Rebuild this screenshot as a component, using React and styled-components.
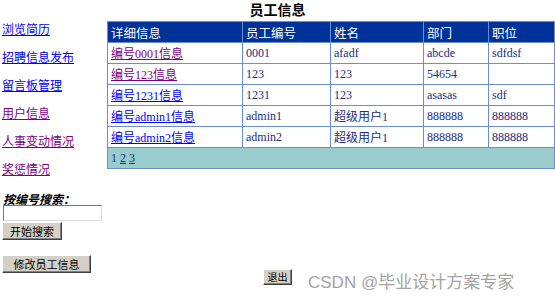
import React from 'react';
import styled, { createGlobalStyle } from 'styled-components';

const GlobalStyle = createGlobalStyle`
  body {
    margin: 0;
    background: #fff;
    font-family: "Liberation Serif", "Noto Sans CJK SC", serif;
  }
`;

const Page = styled.div`
  position: relative;
  width: 555px;
  height: 308px;
  overflow: hidden;
`;

const Title = styled.div`
  height: 21px;
  padding-top: 1px;
  box-sizing: border-box;
  text-align: center;
  font-family: "Noto Sans CJK SC", sans-serif;
  font-weight: bold;
  font-size: 14px;
  line-height: 16px;
  color: #000;
`;

const Body = styled.div`
  display: flex;
  align-items: flex-start;
`;

const Sidebar = styled.div`
  width: 107px;
  display: flex;
  flex-direction: column;
  padding-left: 2px;
  box-sizing: border-box;
`;

const NavLink = styled.a`
  display: block;
  height: 28px;
  font-family: "Noto Sans CJK SC", sans-serif;
  font-size: 12px;
  line-height: 13px;
  padding-top: 1px;
  box-sizing: border-box;
  color: ${p => (p.$visited ? '#800080' : '#0000ff')};
  text-decoration: underline;
  cursor: pointer;
`;

const SearchLabel = styled.div`
  margin-top: 3px;
  font-family: "Noto Sans CJK SC", sans-serif;
  font-size: 12px;
  font-weight: bold;
  font-style: italic;
  line-height: 13px;
  padding-left: 1px;
`;

const SearchInput = styled.input`
  width: 99px;
  height: 16px;
  box-sizing: border-box;
  margin: 0 0 0 1px;
  border: 1px solid #999;
  border-top-color: #777;
  border-left-color: #777;
  border-right-color: #ddd;
  border-bottom-color: #ddd;
  padding: 0;
`;

const GrayButton = styled.button`
  display: block;
  width: ${p => p.$w}px;
  height: ${p => p.$h || 18}px;
  box-sizing: border-box;
  margin: ${p => p.$mt || 0}px 0 0 0;
  padding: 0;
  background: #d4d0c8;
  border: 1px solid;
  border-color: #fff #404040 #404040 #fff;
  box-shadow: inset -1px -1px 0 #808080;
  font-family: "Noto Sans CJK SC", sans-serif;
  font-size: ${p => p.$fs || 11}px;
  line-height: 14px;
  color: #000;
`;

const Table = styled.table`
  width: 447px;
  table-layout: fixed;
  border-collapse: collapse;
  border: 1px solid #6a8ed6;
  font-size: 12px;
`;

const HeadCell = styled.th`
  background: #003399;
  color: #fff;
  text-align: left;
  font-family: "Noto Sans CJK SC", sans-serif;
  font-weight: normal;
  font-size: 12.5px;
  height: 20px;
  padding: 0 0 0 3px;
  border: 1px solid #6a8ed6;
  width: ${p => p.$w}px;
`;

const Cell = styled.td`
  height: 20px;
  padding: 0 0 0 3px;
  border: 1px solid #6a8ed6;
  color: #1c2d7a;
  font-family: "Liberation Serif", "Noto Sans CJK SC", serif;
  font-size: 12px;
  white-space: nowrap;
  overflow: hidden;
`;

const DetailLink = styled.a`
  color: ${p => (p.$visited ? '#800080' : '#0000ff')};
  text-decoration: underline;
  font-family: "Liberation Serif", "Noto Sans CJK SC", serif;
  font-size: 12px;
`;

const PagerCell = styled.td`
  background: #99cccc;
  height: 20px;
  padding: 0 0 0 3px;
  border: 1px solid #6a8ed6;
  color: #1c2d7a;
  font-size: 12px;
`;

const PageLink = styled.a`
  color: #1c2d7a;
  text-decoration: underline;
  margin-left: 3px;
`;

const ExitRow = styled.div`
  display: flex;
  justify-content: center;
  margin-top: -4px;
`;

const Watermark = styled.div`
  position: absolute;
  left: 308px;
  top: 272px;
  font-family: "Liberation Sans", "Noto Sans CJK SC", sans-serif;
  font-size: 17px;
  line-height: 22px;
  color: #a3a3a3;
  white-space: nowrap;
`;

const navItems = [
  { label: '浏览简历' },
  { label: '招聘信息发布' },
  { label: '留言板管理' },
  { label: '用户信息', visited: true },
  { label: '人事变动情况', visited: true },
  { label: '奖惩情况', visited: true },
];

const columns = [
  { label: '详细信息', w: 135 },
  { label: '员工编号', w: 88 },
  { label: '姓名', w: 93 },
  { label: '部门', w: 65 },
  { label: '职位', w: 66 },
];

const rows = [
  { id: '0001', name: 'afadf', dept: 'abcde', pos: 'sdfdsf', visited: true },
  { id: '123', name: '123', dept: '54654', pos: '', visited: true },
  { id: '1231', name: '123', dept: 'asasas', pos: 'sdf' },
  { id: 'admin1', name: '超级用户1', dept: '888888', pos: '888888' },
  { id: 'admin2', name: '超级用户1', dept: '888888', pos: '888888' },
];

export default function App() {
  return (
    <>
      <GlobalStyle />
      <Page>
        <Title>员工信息</Title>
        <Body>
          <Sidebar>
            {navItems.map(item => (
              <NavLink key={item.label} $visited={item.visited}>{item.label}</NavLink>
            ))}
            <SearchLabel>按编号搜索：</SearchLabel>
            <SearchInput type="text" />
            <GrayButton $w={60} $mt={1}>开始搜索</GrayButton>
            <GrayButton $w={89} $mt={15}>修改员工信息</GrayButton>
          </Sidebar>
          <Table>
            <colgroup>
              {columns.map(c => (
                <col key={c.label} style={{ width: c.w }} />
              ))}
            </colgroup>
            <thead>
              <tr>
                {columns.map(c => (
                  <HeadCell key={c.label}>{c.label}</HeadCell>
                ))}
              </tr>
            </thead>
            <tbody>
              {rows.map(r => (
                <tr key={r.id}>
                  <Cell><DetailLink $visited={r.visited}>编号{r.id}信息</DetailLink></Cell>
                  <Cell>{r.id}</Cell>
                  <Cell>{r.name}</Cell>
                  <Cell>{r.dept}</Cell>
                  <Cell>{r.pos}</Cell>
                </tr>
              ))}
              <tr>
                <PagerCell colSpan={5}>
                  1<PageLink>2</PageLink><PageLink>3</PageLink>
                </PagerCell>
              </tr>
            </tbody>
          </Table>
        </Body>
        <ExitRow>
          <GrayButton $w={29} $h={16} $fs={10}>退出</GrayButton>
        </ExitRow>
        <Watermark>CSDN @毕业设计方案专家</Watermark>
      </Page>
    </>
  );
}
